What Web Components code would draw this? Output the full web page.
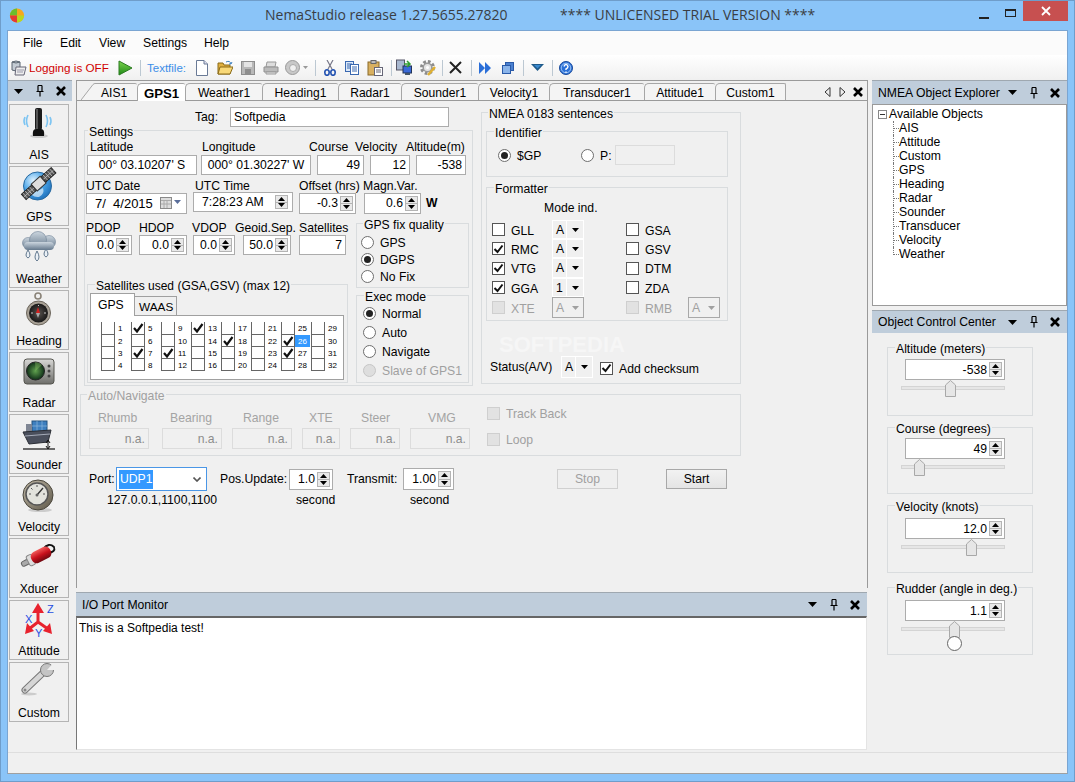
<!DOCTYPE html>
<html><head><meta charset="utf-8"><title>NemaStudio</title>
<style>html,body{margin:0;padding:0;background:#8ac4f8;overflow:hidden}</style></head>
<body>
<nema-window>
  <nema-menubar></nema-menubar>
  <nema-toolbar></nema-toolbar>
  <nema-workspace>
    <nema-dock slot="left">
      <nema-toolbtn label="AIS" icon="ais"></nema-toolbtn>
      <nema-toolbtn label="GPS" icon="gps"></nema-toolbtn>
      <nema-toolbtn label="Weather" icon="weather"></nema-toolbtn>
      <nema-toolbtn label="Heading" icon="heading"></nema-toolbtn>
      <nema-toolbtn label="Radar" icon="radar"></nema-toolbtn>
      <nema-toolbtn label="Sounder" icon="sounder"></nema-toolbtn>
      <nema-toolbtn label="Velocity" icon="velocity"></nema-toolbtn>
      <nema-toolbtn label="Xducer" icon="xducer"></nema-toolbtn>
      <nema-toolbtn label="Attitude" icon="attitude"></nema-toolbtn>
      <nema-toolbtn label="Custom" icon="custom"></nema-toolbtn>
    </nema-dock>
    <nema-documents slot="center"><nema-gps-form></nema-gps-form></nema-documents>
    <nema-monitor slot="center2">This is a Softpedia test!</nema-monitor>
    <nema-explorer slot="right"></nema-explorer>
    <nema-control-center slot="right2">
      <nema-control label="Altitude (meters)" value="-538" thumb="44" pad="12" style="height:69px"></nema-control>
      <nema-control label="Course (degrees)" value="49" thumb="13" pad="11" style="height:67px;margin-top:11px"></nema-control>
      <nema-control label="Velocity (knots)" value="12.0" thumb="65" pad="13" style="height:68px;margin-top:11px"></nema-control>
      <nema-control label="Rudder (angle in deg.)" value="1.1" thumb="48" pad="13" circle style="height:68px;margin-top:14px"></nema-control>
    </nema-control-center>
  </nema-workspace>
  <nema-statusbar></nema-statusbar>
</nema-window>
<script>
function def(name,css,html){customElements.define(name,class extends HTMLElement{connectedCallback(){if(this.shadowRoot)return;const s=this.attachShadow({mode:'open'});s.innerHTML='<style>'+css+'</style>'+html(this)}})}
/* flow(): nested flex rows, gaps derived from reference coordinates */
function flow(ox,oy,rows){let yc=oy,out='';for(const r of rows){let xc=ox,cells='';for(const [x,w,h] of r.items){cells+=`<div style="flex:none;display:flex;align-items:center;height:100%;width:${w}px;margin-left:${x-xc}px">${h}</div>`;xc=x+w}
out+=`<div style="display:flex;height:${r.h}px;margin-top:${r.y-yc}px">${cells}</div>`;yc=r.y+r.h}return out}
const L=(x,t,st='')=>[x,10,`<span style="white-space:nowrap;${st}">${t}</span>`];
const F=(x,w,attrs)=>[x,w,`<nema-field ${attrs}></nema-field>`];
const S=(x,w,v,extra='')=>[x,w,`<nema-spin value="${v}" ${extra}></nema-spin>`];
const R=(x,t,extra='')=>[x,80,`<nema-radio label="${t}" ${extra}></nema-radio>`];
const C=(x,t,extra='')=>[x,50,`<nema-check label="${t}" ${extra}></nema-check>`];
const K=(x,w,v,extra='')=>[x,w,`<nema-combo value="${v}" ${extra}></nema-combo>`];
const G=(x,w,label,lx,inner,extra='')=>[x,w,`<nema-group label="${label}" lx="${lx}" ${extra}>${inner}</nema-group>`];

const I={
ais:`<ellipse cx="22" cy="31" rx="9" ry="2" fill="#ccc"/><path d="M11 10q-3 6 0 12M8 12q-2 4 0 8M29 10q3 6 0 12M33 12q2 4 0 8" fill="none" stroke="#7cc4f2" stroke-width="1.6"/><rect x="18" y="3" width="7" height="22" rx="2" fill="#1b1b1b"/><rect x="19" y="4" width="2" height="20" fill="#555"/><path d="M16 31q-1-7 3-7h5q4 0 3 7z" fill="#111"/>`,
gps:`<defs><radialGradient id="g1" cx=".35" cy=".3" r=".9"><stop offset="0" stop-color="#dff2ff"/><stop offset=".45" stop-color="#48a4e8"/><stop offset="1" stop-color="#0c5aa8"/></radialGradient></defs><circle cx="20.5" cy="19" r="14" fill="url(#g1)" stroke="#2a6aa0"/><path d="M12 22q6 5 14-1q2 6-4 9q-8 1-10-8z" fill="#fff" opacity=".6"/><g transform="rotate(-42 22 17)"><rect x="2" y="13" width="14" height="7" fill="#555" stroke="#222"/><path d="M4 13v7M7 13v7M10 13v7M13 13v7M2 16.5h14" stroke="#ccc" stroke-width=".7"/><rect x="28" y="13" width="14" height="7" fill="#555" stroke="#222"/><path d="M31 13v7M34 13v7M37 13v7M40 13v7M28 16.5h14" stroke="#ccc" stroke-width=".7"/><rect x="16" y="12" width="12" height="9" fill="#ddd" stroke="#333"/></g>`,
weather:`<defs><linearGradient id="g2" x2="0" y2="1"><stop offset="0" stop-color="#ccd6df"/><stop offset="1" stop-color="#64788c"/></linearGradient></defs><g fill="url(#g2)" stroke="#6f8296" stroke-width=".6"><circle cx="11" cy="14" r="5.500"/><circle cx="32" cy="13" r="6.500"/><circle cx="21" cy="11" r="8.500"/><rect x="7" y="13" width="30" height="8" rx="4" stroke="none"/></g><g fill="#eaf0f6" stroke="#62788e"><path d="M11 21q-4 6 0 8q4-2 0-8z"/><path d="M20 22q-4 7 0 10q4-3 0-10z"/><path d="M29 20q-4 6 0 8q4-2 0-8z"/></g>`,
heading:`<defs><radialGradient id="g3"><stop offset="0" stop-color="#5a5450"/><stop offset="1" stop-color="#181818"/></radialGradient></defs><circle cx="21" cy="5" r="3" fill="none" stroke="#8a8378" stroke-width="1.6"/><circle cx="21.5" cy="22" r="12" fill="#a8a196" stroke="#6b655c"/><circle cx="21.5" cy="22" r="9.5" fill="url(#g3)"/><path d="M21 16l2 6h-4z" fill="#d42020"/><path d="M19 22h4l-2 5z" fill="#aaa"/><path d="M14 22h2M27 22h2M21.5 15v-1" stroke="#ccc"/>`,
radar:`<defs><radialGradient id="g4"><stop offset="0" stop-color="#5fa04e"/><stop offset="1" stop-color="#0f2f18"/></radialGradient><linearGradient id="g4b" x2="0" y2="1"><stop offset="0" stop-color="#d8d8d6"/><stop offset="1" stop-color="#6e6e6a"/></linearGradient></defs><rect x="7" y="6" width="30" height="25" rx="3" fill="url(#g4b)" stroke="#55554f"/><circle cx="18.5" cy="18" r="9" fill="url(#g4)" stroke="#222"/><path d="M18.5 18L25 12A9 9 0 0 0 18 9z" fill="#9bd36f" opacity=".35"/><g fill="#444"><circle cx="32" cy="13" r="1.5"/><circle cx="32" cy="18" r="1.5"/><circle cx="32" cy="23" r="1.5"/></g>`,
sounder:`<rect x="15" y="6" width="15" height="11" fill="#3d7fbf" stroke="#23527f"/><path d="M20 6v11M25 6v11M15 11h15" stroke="#8db8dc" stroke-width=".7"/><rect x="9" y="9" width="6" height="9" fill="#7f8694"/><path d="M6 17L34 15L31 27L12 29Z" fill="#4a4f5c" stroke="#2a2d34"/><path d="M8 21L33 19" stroke="#a5abb8"/><path d="M6 34H38" stroke="#111" stroke-width="1.2"/><path d="M31 26v7M29 28l2-3 2 3M29 31l2 3 2-3" fill="none" stroke="#111"/>`,
velocity:`<defs><linearGradient id="g5" x2="1" y2="1"><stop offset="0" stop-color="#c4bcaa"/><stop offset="1" stop-color="#5c5648"/></linearGradient></defs><ellipse cx="23" cy="33" rx="12" ry="2" fill="#ccc"/><circle cx="21" cy="18" r="15" fill="url(#g5)" stroke="#4a463c"/><circle cx="20" cy="17" r="11" fill="#e2e2dc" stroke="#555" stroke-width="1.500"/><path d="M12 17h2M20 8v2M28 17h-2M14 11l1.500 1.500M26 11l-1.500 1.500" stroke="#555"/><path d="M20 18L26 11" stroke="#333" stroke-width="1.300"/><circle cx="20" cy="18" r="1.500" fill="#666"/>`,
xducer:`<defs><linearGradient id="g6" x2="0" y2="1"><stop offset="0" stop-color="#f05a5a"/><stop offset=".5" stop-color="#c8101c"/><stop offset="1" stop-color="#700810"/></linearGradient></defs><path d="M26 10Q32 3 37 8Q39 13 31 14" fill="none" stroke="#111" stroke-width="1.800"/><g transform="rotate(-27 20 18)"><rect x="3" y="15.500" width="8" height="5" rx="2" fill="#aaa" stroke="#666"/><rect x="10" y="12.500" width="6" height="11" rx="2" fill="#ddd" stroke="#888"/><rect x="14" y="12" width="21" height="12" rx="5" fill="url(#g6)"/></g>`,
attitude:`<g stroke="#e8222e" stroke-width="3" fill="none"><path d="M21 22V9M21 21L12 28M21 21L31 28"/></g><g fill="#e8222e"><path d="M21 2L27 12H15z"/><path d="M8 33L10 22L17 30z"/><path d="M35 33L33 22L26 30z"/></g><g fill="#1f4de0" font-family="Liberation Sans" font-size="11"><text x="30" y="12">Z</text><text x="8" y="22">X</text><text x="18" y="36">Y</text></g>`,
custom:`<ellipse cx="12" cy="31" rx="8" ry="1.500" fill="#ccc"/><path d="M8 27L29 7" stroke="#777" stroke-width="7" stroke-linecap="round"/><path d="M8 27L29 7" stroke="#d6d6d6" stroke-width="5" stroke-linecap="round"/><circle cx="30" cy="7" r="6.500" fill="#c4c4c4" stroke="#777"/><path d="M30 7L39 -3L40 7Z" fill="#f0f0f0"/><circle cx="8" cy="27" r="1.500" fill="#888"/>`
};
const sv=(w,h,b)=>`<svg width="${w}" height="${h}" viewBox="0 0 ${w} ${h}" style="display:block">${b}</svg>`;
const SEP=`<div style="width:1px;height:16px;background:#bcc8d2"></div>`;
const TB=[
[10,17,sv(17,17,`<path d="M2 3q4-2 8 0v8q-4 2-8 0z" fill="#c4ccd4" stroke="#5a6570"/><path d="M2 3q4 2 8 0" fill="none" stroke="#5a6570"/><path d="M6 8h10l-2 8H5z" fill="#eee" stroke="#667"/><path d="M7 11h7M7 13h6" stroke="#99a"/>`)],
[29,10,`<span style="color:#d00000;white-space:nowrap;font-size:11.700px">Logging is OFF</span>`],
[118,15,sv(15,16,`<defs><linearGradient id="p" x2="0" y2="1"><stop offset="0" stop-color="#7cd44c"/><stop offset="1" stop-color="#1f8a18"/></linearGradient></defs><path d="M1 1L14 8L1 15Z" fill="url(#p)" stroke="#2a7a20"/>`)],
[140,1,SEP],
[147,10,`<span style="color:#3c8ee8;white-space:nowrap;font-size:11.500px">Textfile:</span>`],
[196,12,sv(12,16,`<path d="M.5.5H8L11.500 4V15.500H.5Z" fill="#fff" stroke="#6a7a96"/><path d="M8 .5V4H11.500" fill="#dde" stroke="#6a7a96"/>`)],
[217,16,sv(16,16,`<path d="M1 3h5l1 2h6v9H1z" fill="#e0b040" stroke="#8a6a18"/><path d="M3 7h13l-3 7H1z" fill="#f8d878" stroke="#8a6a18"/><path d="M9 2q4-2 5 2M14 4l-2 0M14 4l1-2" fill="none" stroke="#3a7fc0"/>`)],
[241,14,sv(14,14,`<rect x=".5" y=".5" width="13" height="13" fill="#b8b8b8" stroke="#8e8e8e"/><rect x="3" y="1" width="8" height="5" fill="#e4e4e4"/><rect x="4" y="8" width="6" height="5" fill="#8e8e8e"/>`)],
[263,16,sv(16,14,`<path d="M4 1h9l-1 5H3z" fill="#ddd" stroke="#999"/><path d="M1 6h14v5H1z" fill="#bbb" stroke="#919191"/><path d="M3 11h10v2H3z" fill="#e4e4e4" stroke="#999"/>`)],
[285,15,sv(15,15,`<circle cx="7.500" cy="7.500" r="7" fill="#c8c8c8" stroke="#999"/><circle cx="8" cy="8" r="3.500" fill="#f0f0f0" stroke="#aaa"/>`)],
[303,5,sv(5,3,`<path d="M0 0h5l-2.500 3z" fill="#999"/>`)],
[315,1,SEP],
[324,12,sv(12,16,`<path d="M3 0L8 9M9 0L4 9" stroke="#778" stroke-width="1.200"/><g fill="none" stroke="#2050b0" stroke-width="1.600"><ellipse cx="3" cy="12.500" rx="2.200" ry="2.800"/><ellipse cx="9" cy="12.500" rx="2.200" ry="2.800"/></g>`)],
[345,14,sv(14,14,`<rect x=".5" y=".5" width="8" height="10" fill="#dbe8f8" stroke="#3a68b0"/><path d="M2 3h5M2 5h5M2 7h5" stroke="#3a68b0"/><rect x="5.500" y="3.500" width="8" height="10" fill="#fff" stroke="#3a68b0"/><path d="M7 6h5M7 8h5M7 10h5" stroke="#3a68b0"/>`)],
[367,16,sv(16,16,`<rect x="1" y="2" width="11" height="13" fill="#d8b060" stroke="#8a6a28"/><rect x="4" y="0.500" width="5" height="3" fill="#bbb" stroke="#666"/><rect x="7.500" y="7.500" width="8" height="8" fill="#fff" stroke="#667"/><path d="M9 10h5M9 12h5" stroke="#667"/>`)],
[391,1,SEP],
[396,16,sv(16,17,`<rect x="0.500" y="1" width="8" height="10" fill="#a8b8d0" stroke="#556"/><rect x="7" y="7" width="8.500" height="7" fill="#3a6ad8" stroke="#235"/><path d="M9 15h5" stroke="#456" stroke-width="2"/><path d="M8 5h5M11 2l3 3-3 3" fill="none" stroke="#30a030" stroke-width="1.500"/>`)],
[420,16,sv(16,16,`<circle cx="7.500" cy="7.500" r="5.800" fill="none" stroke="#8c8c8c" stroke-width="3.400" stroke-dasharray="2.600 1.900"/><circle cx="7.500" cy="7.500" r="4.300" fill="#e4e4e4" stroke="#999" stroke-width="1.500"/><circle cx="7.500" cy="7.500" r="1.500" fill="#fff"/><path d="M8 15L15 7" stroke="#e0b030" stroke-width="2.400"/>`)],
[442,1,SEP],
[449,13,sv(13,13,`<path d="M1 1L12 12M12 1L1 12" stroke="#222" stroke-width="2"/>`)],
[471,1,SEP],
[479,12,sv(12,12,`<path d="M0 0L6 6L0 12ZM6 0L12 6L6 12Z" fill="#2a6ed8"/>`)],
[502,12,sv(12,12,`<rect x="3.500" y=".5" width="8" height="8" fill="#4a80d0" stroke="#2a5aa8"/><rect x=".5" y="3.500" width="8" height="8" fill="#8ab4ea" stroke="#2a5aa8"/>`)],
[523,1,SEP],
[531,13,sv(13,7,`<path d="M0 0h13L6.500 7Z" fill="#1f5a8a"/><path d="M3 1h7L6.500 4.500Z" fill="#3a8ad0"/>`)],
[552,1,SEP],
[559,14,sv(14,14,`<circle cx="7" cy="7" r="6.500" fill="#2a70d8" stroke="#1a4a9a"/><circle cx="7" cy="7" r="4.800" fill="none" stroke="#9cc4f4"/><path d="M5 5.500q.5-2 2-2t2 2q0 1.500-2 2.500v1M7 10.500v1.200" fill="none" stroke="#fff" stroke-width="1.400"/>`)]
];

const ICN={down:sv(9,5,`<path d="M0 0h9L4.500 5Z" fill="#000"/>`),pin:sv(9,12,`<path d="M3 .5H7M3 .5V6.500M7 .5V6.500M1.500 6.500H8.500M5 6.500V11.500" stroke="#000" fill="none" stroke-width="1.200"/>`),x:sv(10,10,`<path d="M1 1L9 9M9 1L1 9" stroke="#000" stroke-width="2.600"/>`)};

def('nema-field',`:host{display:flex;align-items:center;box-sizing:border-box;width:100%;height:100%;border:1px solid #acacac;background:#fff;padding:0 3px;white-space:pre}:host([disabled]){border-color:#dcdcdc;background:#f0f0f0;color:#8c8c8c}:host([align=right]){justify-content:flex-end}:host([align=center]){justify-content:center}`,e=>`${e.getAttribute('value')||''}`);
def('nema-spin',`:host{display:flex;align-items:center;box-sizing:border-box;width:100%;height:100%;border:1px solid #acacac;background:#fff;white-space:pre}.v{flex:1;text-align:right;padding-right:2px}:host([left]) .v{text-align:left;padding-left:8px}:host([left]) .b{margin-right:4px}.b{flex:none;width:13px;align-self:stretch;margin:2px 2px 2px 0;display:flex;flex-direction:column;border:1px solid #b4b4b4;box-sizing:border-box;background:#e9e9e9}.b div{flex:1;display:flex;align-items:center;justify-content:center}.b div:first-child{border-bottom:1px solid #b4b4b4}`,e=>`<div class="v">${e.getAttribute('value')}</div><div class="b"><div>${sv(7,4,'<path d="M3.500 0L7 4H0Z" fill="#000"/>')}</div><div>${sv(7,4,'<path d="M0 0H7L3.500 4Z" fill="#000"/>')}</div></div>`);
def('nema-date',`:host{display:flex;align-items:center;box-sizing:border-box;width:100%;height:100%;border:1px solid #acacac;background:#fff;white-space:pre;padding-left:8px}.v{flex:1;font-size:13px}svg{margin-right:5px}`,e=>`<div class="v">${e.getAttribute('value')}</div>${sv(21,12,'<rect x=".5" y=".5" width="11" height="11" fill="#ddd" stroke="#8a8a8a"/><path d="M1 3.500h10M4 4v7M7 4v7M1 7h10" stroke="#aaa"/><path d="M14 3h7l-3.500 4z" fill="#5a6e9a"/>')}`);
def('nema-radio',`:host{display:flex;align-items:center;gap:6px;white-space:nowrap}i{flex:none;box-sizing:border-box;width:13px;height:13px;border:1px solid #6e6e6e;border-radius:50%;background:#fff;display:flex;align-items:center;justify-content:center}b{width:7px;height:7px;border-radius:50%;background:#222}span{padding-top:2px}:host([disabled]){color:#a0a0a0}:host([disabled]) i{background:#dedede;border-color:#c6c6c6}`,e=>`<i>${e.hasAttribute('checked')?'<b></b>':''}</i><span>${e.getAttribute('label')}</span>`);
def('nema-check',`:host{display:flex;align-items:center;gap:6px;white-space:nowrap}i{flex:none;box-sizing:border-box;width:13px;height:13px;border:1px solid #555;background:#fff;display:flex;align-items:center;justify-content:center}span{padding-top:2px}:host([disabled]){color:#a0a0a0}:host([disabled]) i{background:#e2e2e2;border-color:#cfcfcf}`,e=>`<i>${e.hasAttribute('checked')?sv(11,10,'<path d="M1.500 5L4.500 8L9.500 1.500" fill="none" stroke="#111" stroke-width="2"/>'):''}</i><span>${e.getAttribute('label')}</span>`);
def('nema-combo',`:host{display:flex;box-sizing:border-box;width:100%;height:100%;border:1px solid #fff}.a{width:14px;padding-left:3px;box-sizing:border-box;border-right:1px solid #fff;display:flex;align-items:center}.b{flex:1;display:flex;align-items:center;justify-content:center}:host([disabled]){border-color:#a8a8a8;color:#a0a0a0}:host([disabled]) .a{border-right:0}`,e=>`<div class="a">${e.getAttribute('value')}</div><div class="b">${sv(7,4,`<path d="M0 0H7L3.500 4Z" fill="${e.hasAttribute('disabled')?'#a0a0a0':'#000'}"/>`)}</div>`);
def('nema-group',`:host{display:block;box-sizing:border-box;position:relative;width:100%;height:100%;border:1px solid #d9dcde}.l{position:absolute;top:-6px;line-height:14px;background:#f0f0f0;padding:0 1px;white-space:nowrap;font-size:var(--lfs,inherit)}:host([disabled]) .l{color:#a0a0a0}`,e=>`<span class="l" style="left:${(+e.getAttribute('lx'))-2}px">${e.getAttribute('label')}</span><slot></slot>`);
def('nema-button',`:host{display:flex;align-items:center;justify-content:center;box-sizing:border-box;width:100%;height:100%;border:1px solid #a8a8a8;background:linear-gradient(#f2f2f2,#e4e4e4)}:host([disabled]){border-color:#d0d0d0;background:#efefef;color:#a0a0a0}`,e=>e.getAttribute('label'));
def('nema-port',`:host{display:flex;align-items:center;box-sizing:border-box;width:100%;height:100%;border:1px solid #4a96e6;background:#fff;padding-left:2px}.s{background:#3399ff;color:#fff;width:34px;padding-left:1px;box-sizing:border-box;height:19px;line-height:19px}svg{margin-left:auto;margin-right:5px}`,e=>`<span class="s">UDP1</span>${sv(8,5,'<path d="M.5.5L4 4L7.500.5" fill="none" stroke="#555" stroke-width="1.600"/>')}`);
const checkedSats=[5,7,11,13,18,26,27];
def('nema-sat-panel',`:host{display:block;width:100%;height:100%}.t{display:flex;height:22px;align-items:flex-end}.g{position:relative;z-index:1;box-sizing:border-box;width:45px;height:23px;margin-bottom:-1px;background:#fff;border:1px solid #a0a0a0;border-bottom:0;padding:4px 0 0 7px}.w{box-sizing:border-box;width:42px;height:19px;border:1px solid #a0a0a0;border-bottom:0;border-left:0;padding:3px 0 0 4px;font-size:11.800px}.p{box-sizing:border-box;height:65px;border:1px solid #a0a0a0;background:#fff;padding:6px 0 0 10px;display:flex}.c{width:30px;flex:none}.r{display:flex;height:12px}.r:first-child{height:13px}.k{flex:none;box-sizing:border-box;width:14px;border:1px solid #666;border-top:0;display:flex;align-items:center;justify-content:center}.n{width:15px;padding-left:3px;box-sizing:border-box;font-size:8px;display:flex;align-items:center}.n.h{background:#3399ff;color:#fff}`,e=>{let h='';for(let c=0;c<8;c++){h+='<div class="c">';for(let r=0;r<4;r++){const n=c*4+r+1;h+=`<div class="r"><div class="k">${checkedSats.includes(n)?sv(12,10,'<path d="M2 5L5 8.500L10.500 1" fill="none" stroke="#111" stroke-width="2.200"/>'):''}</div><div class="n${n==26?' h':''}">${n}</div></div>`}h+='</div>'}return `<div class="t"><div class="g">GPS</div><div class="w">WAAS</div></div><div class="p">${h}</div>`});
def('nema-head',`:host{display:flex;align-items:center;box-sizing:border-box;width:100%;background:#bfcddb;border-top:1px solid #9fa8b0;padding:0 2px 0 6px}:host([compact]){padding:0 1px 0 0}.t{white-space:nowrap;flex:1}.i{flex:none;width:21px;display:flex;justify-content:center}`,e=>`<div class="t">${e.getAttribute('label')||''}</div><div class="i">${ICN.down}</div><div class="i">${ICN.pin}</div><div class="i">${ICN.x}</div>`);
def('nema-toolbtn',`:host{display:flex;flex-direction:column;align-items:center;box-sizing:border-box;width:60px;height:60px;margin-bottom:2px;border:1px solid #b4b4b4;background:#f0f0f0}svg{display:block;flex:none}span{margin-top:5px;line-height:14px}`,e=>`<svg width="44" height="38" viewBox="0 0 44 38">${I[e.getAttribute('icon')]}</svg><span>${e.getAttribute('label')}</span>`);
def('nema-dock',`:host{display:block;width:64px}.b{padding:3px 0 0 1px}nema-head{height:21px}`,()=>`<nema-head compact></nema-head><div class="b"><slot></slot></div>`);
def('nema-tabs',`:host{display:flex;height:19px;padding-left:4px;position:relative;align-items:flex-end}.s{flex:none;width:14px;height:17px;display:block}.tab{flex:none;box-sizing:border-box;height:17px;border-top:1px solid #a6a6a6;border-left:1px solid #a6a6a6;border-radius:5px 2px 0 0;background:#f4f4f4;display:flex;align-items:center;justify-content:center;white-space:nowrap;font-size:12.100px;padding-top:1px}.f{border-left:0;border-radius:0 2px 0 0;justify-content:flex-start;padding-left:6px}.last{border-right:1px solid #a6a6a6}.a{background:#fff;font-weight:bold;height:18px;margin-bottom:-1px;position:relative;z-index:1;font-size:13.200px}.nav{margin-left:auto;display:flex;align-items:center;height:17px;margin-right:4px}`,e=>{const tabs=[['AIS1',42],['GPS1',48],['Weather1',77],['Heading1',76],['Radar1',63],['Sounder1',77],['Velocity1',71],['Transducer1',95],['Attitude1',71],['Custom1',71]];let h=`<svg class="s" viewBox="0 0 14 17"><path d="M0 17L12 1.500Q13 .5 14 .5V17Z" fill="#f4f4f4"/><path d="M0 17L12 1.500Q13 .5 14 .5" fill="none" stroke="#a6a6a6"/></svg>`;tabs.forEach((t,i)=>{h+=`<div class="tab${i==0?' f':''}${i==1?' a':''}${i==9?' last':''}" style="width:${t[1]}px">${t[0]}</div>`});h+=`<div class="nav"><span style="margin-right:8px">${sv(7,10,'<path d="M6 .5V9.500L1 5Z" fill="none" stroke="#333"/>')}</span><span style="margin-right:7px">${sv(7,10,'<path d="M1 .5V9.500L6 5Z" fill="none" stroke="#333"/>')}</span>${ICN.x}</div>`;return h});
def('nema-documents',`:host{display:block;box-sizing:border-box;width:792px;height:508px;border:1px solid #9a9a9a}.p{box-sizing:border-box;height:488px;border-top:1px solid #9a9a9a;background:#f0f0f0}`,()=>`<nema-tabs></nema-tabs><div class="p"><slot></slot></div>`);
def('nema-monitor',`:host{display:block;width:791px;margin-top:4px}nema-head{height:24px}.b{box-sizing:border-box;height:134px;background:#fff;border:1px solid #e4e4e4;border-top:2px solid #666;border-left:1px solid #777;padding:3px 2px;line-height:14px;font-size:12px}`,()=>`<nema-head label="I/O Port Monitor"></nema-head><div class="b"><slot></slot></div>`);
def('nema-explorer',`:host{display:block;width:195px}nema-head{height:24px}.b{box-sizing:border-box;height:202px;background:#fff;border:1px solid #9a9a9a;padding:2px 0 0 5px;line-height:14px}.r{display:flex;align-items:center;height:14px;white-space:nowrap}.m{box-sizing:border-box;width:9px;height:9px;border:1px solid #888;margin-right:2px;display:flex;align-items:center;justify-content:center}.m i{display:block;width:5px;height:1px;background:#333}.t{margin-left:15px}.i{display:flex;height:14px;border-left:1px dotted #777;white-space:nowrap;box-sizing:border-box}.i.l{border-left-color:transparent}.c{flex:none;width:5px;height:7px;border-bottom:1px dotted #777}.l .c{border-left:1px dotted #777;margin-left:-1px}`,()=>{const it=['AIS','Attitude','Custom','GPS','Heading','Radar','Sounder','Transducer','Velocity','Weather'];return `<nema-head label="NMEA Object Explorer"></nema-head><div class="b"><div class="r"><div class="m"><i></i></div>Available Objects</div><div class="t">${it.map((t,i)=>`<div class="i${i==9?' l':''}"><div class="c"></div>${t}</div>`).join('')}</div></div>`});
def('nema-control-center',`:host{display:block;width:195px;margin-top:4px}nema-head{height:23px}.b{padding:14px 34px 0 15px}`,()=>`<nema-head label="Object Control Center"></nema-head><div class="b"><slot></slot></div>`);
def('nema-control',`:host{display:block;width:146px}.w{box-sizing:border-box;width:100px;height:21px;margin-left:17px}.tr{position:relative;box-sizing:border-box;width:104px;height:4px;margin:6px 0 0 13px;background:#e6e6e6;border:1px solid #d4d4d4}.th{position:absolute;top:-7px}.ci{position:absolute;box-sizing:border-box;width:15px;height:15px;border-radius:50%;background:#fff;border:1px solid #666;top:8px}`,e=>{const t=+e.getAttribute('thumb');return `<nema-group label="${e.getAttribute('label')}" lx="9"><div class="w" style="margin-top:${(+e.getAttribute('pad'))-1}px"><nema-spin value="${e.getAttribute('value')}"></nema-spin></div><div class="tr"><div class="th" style="left:${t-1}px">${sv(11,17,'<path d="M.5 16.500V5L5.500 .5L10.500 5V16.500Z" fill="#e6e6e6" stroke="#a8a8a8"/>')}</div>${e.hasAttribute('circle')?`<div class="ci" style="left:${t-3}px"></div>`:''}</div></nema-group>`});
def('nema-statusbar',`:host{display:block;box-sizing:border-box;height:21px;background:#f0f0f0;border-top:1px solid #dedede}`,()=>'');
def('nema-workspace',`:host{display:flex;height:672px;background:#f0f0f0}.l{width:64px;margin-right:4px}.c{width:792px;margin-right:4px}.r{width:195px}`,()=>`<div class="l"><slot name="left"></slot></div><div class="c"><slot name="center"></slot><slot name="center2"></slot></div><div class="r"><slot name="right"></slot><slot name="right2"></slot></div>`);
def('nema-menubar',`:host{display:block;height:24px;background:#fbfbfb}`,()=>flow(8,31,[{y:31,h:24,items:[L(23,'File'),L(60,'Edit'),L(99,'View'),L(143,'Settings'),L(204,'Help')]}]));
def('nema-toolbar',`:host{display:block;height:25px;background:linear-gradient(#ffffff,#f0f0f0)}`,()=>flow(8,55,[{y:55,h:25,items:TB}]));
def('nema-window',`:host{display:flex;flex-direction:column;box-sizing:border-box;width:1075px;height:782px;background:#8ac4f8;border:1px solid #6f9dca;font:12.200px "Liberation Sans",Arial,sans-serif;color:#000}.tb{height:29px;flex:none;color:#3a3e44;font:14px "Open Sans",sans-serif}.cl{box-sizing:border-box;margin:0 6px;width:1061px;height:744px;flex:none;border:1px solid #7aa5d2;border-bottom-color:#a0a0a0;display:flex;flex-direction:column}.x{width:45px;height:20px;background:#c75050;display:flex;align-items:center;justify-content:center;align-self:flex-start}`,()=>`<div class="tb">${flow(1,1,[{y:1,h:29,items:[
[9,16,`<svg width="17" height="15" viewBox="0 0 17 15"><circle cx="8.500" cy="7.500" r="7.500" fill="#f6a81c"/><path d="M8.500 0A7.500 7.500 0 0 0 1 7.500H8.500Z" fill="#6cbe2c"/><path d="M1 7.500A7.500 7.500 0 0 0 8.500 15V7.500Z" fill="#e63a34"/><path d="M8.500 7.500V15A7.500 7.500 0 0 0 16 7.500Z" fill="#b8d820"/></svg>`],
L(265,'NemaStudio release 1.27.5655.27820','margin-top:-3px'),L(560,'**** UNLICENSED TRIAL VERSION ****','margin-top:-3px'),
[979,10,`<div style="width:10px;height:2px;background:#222;margin-top:4px"></div>`],
[1005,11,`<div style="box-sizing:border-box;width:11px;height:8px;border:1px solid #222;border-top-width:2px;margin-top:-6px"></div>`],
[1023,45,`<div class="x">${sv(10,10,'<path d="M1 1L9 9M9 1L1 9" stroke="#fff" stroke-width="1.800"/>')}</div>`]
]}])}</div><div class="cl"><slot></slot></div>`);

/* GPS form */
const settings=flow(85,131,[
{y:140,h:14,items:[L(90,'Latitude'),L(202,'Longitude'),L(309,'Course'),L(355,'Velocity'),L(406,'Altitude(m)')]},
{y:155,h:20,items:[F(87,110,`value="00° 03.10207' S" align="center"`),F(201,110,`value="000° 01.30227' W" align="center"`),F(317,47,'value="49" align="right"'),F(370,40,'value="12" align="right"'),F(416,50,'value="-538" align="right"')]},
{y:179,h:14,items:[L(86,'UTC Date'),L(195,'UTC Time'),L(299,'Offset (hrs)'),L(363,'Magn.Var.')]},
{y:193,h:20,items:[[86,101,'<nema-date value="7/  4/2015" style="height:21px"></nema-date>'],[193,100,'<nema-spin value="7:28:23 AM" left style="height:20px;margin-top:-2px"></nema-spin>'],S(299,57,'-0.3','style="height:21px"'),S(364,57,'0.6','style="height:21px"'),L(426,'W','font-weight:bold')]},
{y:220,h:163,items:[[85,265,`<div style="width:100%;height:100%">${flow(85,220,[
 {y:221,h:14,items:[L(86,'PDOP'),L(139,'HDOP'),L(192,'VDOP'),L(235,'Geoid.Sep.'),L(299,'Satellites')]},
 {y:235,h:20,items:[S(86,46,'0.0'),S(139,48,'0.0'),S(193,42,'0.0'),S(243,48,'50.0'),F(299,47,'value="7" align="right"')]},
 {y:284,h:99,items:[G(87,261,'Satellites used (GSA,GSV) (max 12)',9,flow(88,285,[{y:293,h:87,items:[[90,254,'<nema-sat-panel></nema-sat-panel>']]}]),'style="--lfs:12px"')]}
])}</div>`],[356,113,`<div style="width:100%;height:100%">${flow(356,220,[
 {y:223,h:65,items:[G(356,113,'GPS fix quality',8,flow(357,224,[{y:235,h:14,items:[R(361,'GPS')]},{y:252,h:14,items:[R(361,'DGPS','checked')]},{y:269,h:14,items:[R(361,'No Fix')]}]))]},
 {y:295,h:88,items:[G(356,113,'Exec mode',9,flow(357,296,[{y:306,h:14,items:[R(363,'Normal','checked')]},{y:325,h:14,items:[R(363,'Auto')]},{y:344,h:14,items:[R(363,'Navigate')]},{y:363,h:14,items:[R(363,'Slave of GPS1','disabled')]}]))]}
])}</div>`]]}
]);
const left=flow(84,101,[
{y:107,h:20,items:[L(195,'Tag:'),F(230,219,'value="Softpedia"')]},
{y:130,h:256,items:[G(84,389,'Settings',5,settings)]}
]);
const fmt=flow(487,188,[
{y:201,h:14,items:[L(544,'Mode ind.')]},
{y:220,h:19,items:[C(492,'GLL'),K(552,32,'A'),C(626,'GSA')]},
{y:239,h:19,items:[C(492,'RMC','checked'),K(552,32,'A'),C(626,'GSV')]},
{y:258,h:20,items:[C(492,'VTG','checked'),K(552,32,'A'),C(626,'DTM')]},
{y:278,h:19,items:[C(492,'GGA','checked'),K(552,32,'1'),C(626,'ZDA')]},
{y:297,h:21,items:[C(492,'XTE','disabled'),K(552,32,'A','disabled'),C(626,'RMB','disabled'),K(688,32,'A','disabled')]}
]);
const nmea=`<span class="wm">SOFTPEDIA</span>`+flow(482,113,[
{y:131,h:46,items:[G(486,242,'Identifier',9,flow(487,132,[{y:145,h:20,items:[R(498,'$GP','checked'),R(581,'P:'),F(615,60,'disabled')]}]))]},
{y:187,h:134,items:[G(486,242,'Formatter',9,fmt)]},
{y:356,h:22,items:[L(490,'Status(A/V)'),K(561,32,'A'),C(600,'Add checksum','checked style="margin-top:2px"')]}
]);
const auto=flow(81,395,[{y:395,h:60,items:[[81,392,`<div style="width:100%;height:100%;color:#a4a4a4">${flow(81,395,[
 {y:411,h:14,items:[L(98,'Rhumb'),L(170,'Bearing'),L(243,'Range'),L(309,'XTE'),L(361,'Steer'),L(428,'VMG')]},
 {y:428,h:21,items:[[89,60],[162,60],[232,60],[302,38],[350,50],[410,60]].map(([x,w])=>F(x,w,'value="n.a." align="right" disabled'))}
])}</div>`],[487,100,`<div style="width:100%;height:100%">${flow(487,395,[{y:406,h:14,items:[C(487,'Track Back','disabled')]},{y:432,h:14,items:[C(487,'Loop','disabled')]}])}</div>`]]}]);
def('nema-gps-form',`:host{display:block;height:486px;overflow:hidden}.wm{position:absolute;left:17px;top:219px;font:bold 22px "Liberation Sans",sans-serif;color:#f6f6f6;white-space:nowrap}`,()=>flow(77,101,[
{y:101,h:285,items:[[84,389,`<div style="width:100%;height:100%">${left}</div>`],[481,260,`<div style="width:100%;height:100%">${flow(481,101,[{y:112,h:272,items:[G(481,260,'NMEA 0183 sentences',8,nmea)]}])}</div>`]]},
{y:394,h:62,items:[G(80,661,'Auto/Navigate',8,auto,'disabled')]},
{y:467,h:24,items:[L(89,'Port:'),[116,91,'<nema-port></nema-port>'],L(220,'Pos.Update:'),[289,44,'<nema-spin value="1.0" style="height:21px"></nema-spin>'],L(347,'Transmit:'),[403,51,'<nema-spin value="1.00" style="height:22px"></nema-spin>'],[557,61,'<nema-button label="Stop" disabled style="height:20px"></nema-button>'],[666,61,'<nema-button label="Start" style="height:20px"></nema-button>']]},
{y:493,h:14,items:[L(107,'127.0.0.1,1100,1100'),L(296,'second'),L(410,'second')]}
]));
</script>
</body></html>
